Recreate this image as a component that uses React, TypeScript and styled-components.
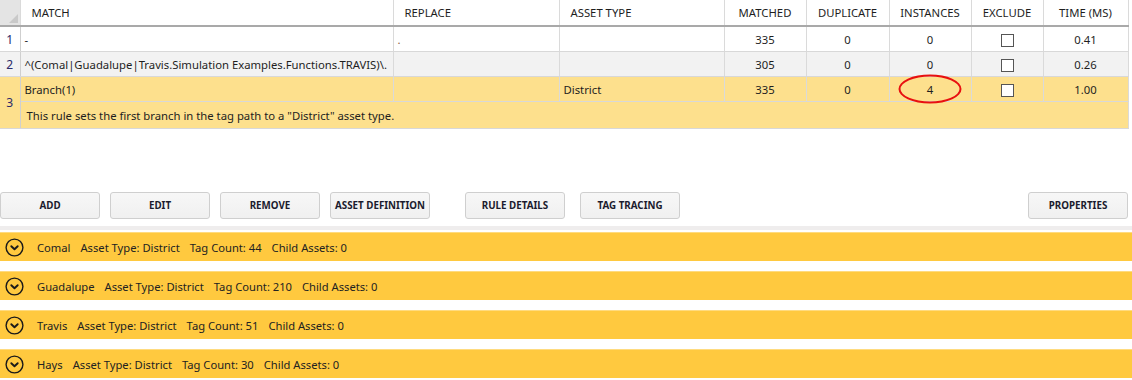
import React from "react";
import styled, { createGlobalStyle } from "styled-components";

const GlobalStyle = createGlobalStyle`
  body {
    margin: 0;
    background: #ffffff;
    font-family: "Segoe UI", "Noto Sans", "Liberation Sans", sans-serif;
    color: #1e1e1e;
  }
`;

const Page = styled.div`
  width: 1132px;
  height: 380px;
  overflow: hidden;
  display: flex;
  flex-direction: column;
`;

const GridTable = styled.table`
  width: 1128px;
  border-collapse: collapse;
  table-layout: fixed;
  font-size: 11.3px;
`;

const HeadCell = styled.th<{ $center?: boolean }>`
  height: 25px;
  padding: 0 0 0 ${(p) => (p.$center ? "0" : "11px")};
  text-align: ${(p) => (p.$center ? "center" : "left")};
  font-weight: 400;
  background: #ffffff;
  border-right: 1px solid #dadada;
  border-bottom: 2px solid #a9a9a9;
  white-space: nowrap;
  overflow: hidden;
`;

const Corner = styled.th`
  position: relative;
  background: #e4e4e4;
  border-right: 1px solid #dadada;
  border-bottom: 2px solid #a9a9a9;
  &::after {
    content: "";
    position: absolute;
    right: 2px;
    bottom: 2px;
    border-left: 9px solid transparent;
    border-bottom: 9px solid #c9c9c9;
  }
`;

const Row = styled.tr<{ $bg: string }>`
  background: ${(p) => p.$bg};
`;

const RowHead = styled.td`
  text-align: center;
  font-size: 12px;
  color: #2a2a6a;
  border-right: 1px solid #cfcfcf;
  border-bottom: 1px solid #d8d8d8;
`;

const Cell = styled.td<{ $center?: boolean }>`
  position: relative;
  height: 24px;
  padding: 0 0 0 ${(p) => (p.$center ? "0" : "4px")};
  text-align: ${(p) => (p.$center ? "center" : "left")};
  border-right: 1px solid #dadada;
  border-bottom: 1px solid #d8d8d8;
  white-space: nowrap;
`;

const DetailCell = styled.td`
  height: 26px;
  padding: 0 0 0 6px;
  border-bottom: 1px solid #d8d8d8;
  border-right: 1px solid #dadada;
`;

const Dot = styled.span`
  color: #8a5a3a;
`;

const Check = styled.span`
  display: inline-block;
  width: 13px;
  height: 13px;
  box-sizing: border-box;
  border: 1px solid #555;
  background: #fff;
  vertical-align: middle;
`;

const Circled = styled.span`
  position: absolute;
  left: 50%;
  top: 50%;
  width: 63px;
  height: 29px;
  transform: translate(-50%, -50%);
  box-sizing: border-box;
  border: 2.5px solid #e81010;
  border-radius: 50%;
`;

const Toolbar = styled.div`
  display: flex;
  align-items: center;
  margin-top: 63px;
  padding-right: 4px;
`;

const Button = styled.button<{ $gap?: number }>`
  width: 100px;
  height: 27px;
  margin-left: ${(p) => p.$gap ?? 10}px;
  padding: 0;
  border: 1px solid #cfcfcf;
  border-radius: 3px;
  background: linear-gradient(#f7f7f7, #f0f0f0);
  font-family: "Segoe UI", "Noto Sans", "Liberation Sans", sans-serif;
  font-size: 9.8px;
  font-weight: 700;
  color: #1b1b2e;
  white-space: nowrap;
  &:first-child {
    margin-left: 0;
  }
`;

const Fill = styled.div`
  flex: 1;
`;

const Splitter = styled.div`
  height: 4px;
  margin-top: 7px;
  background: #efeded;
`;

const AssetList = styled.div`
  display: flex;
  flex-direction: column;
  gap: 10px;
  margin-top: 2px;
`;

const AssetBar = styled.div`
  height: 29px;
  box-sizing: border-box;
  display: flex;
  align-items: center;
  gap: 10px;
  padding-left: 5px;
  background: #ffc93f;
  border-top: 1px solid #ffdb7f;
  font-size: 11.2px;
  color: #222;
`;

const Info = styled.span<{ $first?: boolean }>`
  margin-left: ${(p) => (p.$first ? "3px" : "0")};
  white-space: nowrap;
`;

const ChevronCircle = () => (
  <svg width="19" height="19" viewBox="0 0 19 19">
    <circle cx="9.5" cy="9.5" r="8.4" fill="none" stroke="#1a1a1a" strokeWidth="1.4" />
    <path d="M6.3 8.2 L9.5 11.3 L12.7 8.2" fill="none" stroke="#1a1a1a" strokeWidth="1.9" strokeLinecap="round" strokeLinejoin="round" />
  </svg>
);

const columns = [
  { label: "MATCH", width: 373 },
  { label: "REPLACE", width: 166 },
  { label: "ASSET TYPE", width: 165 },
  { label: "MATCHED", width: 82, center: true },
  { label: "DUPLICATE", width: 83, center: true },
  { label: "INSTANCES", width: 82, center: true },
  { label: "EXCLUDE", width: 72, center: true },
  { label: "TIME (MS)", width: 85, center: true },
];

const assets = [
  { name: "Comal", tags: 44 },
  { name: "Guadalupe", tags: 210 },
  { name: "Travis", tags: 51 },
  { name: "Hays", tags: 30 },
];

export default function App() {
  return (
    <Page>
      <GlobalStyle />
      <GridTable>
        <colgroup>
          <col style={{ width: 20 }} />
          {columns.map((c) => (
            <col key={c.label} style={{ width: c.width }} />
          ))}
        </colgroup>
        <thead>
          <tr>
            <Corner />
            {columns.map((c) => (
              <HeadCell key={c.label} $center={c.center}>
                {c.label}
              </HeadCell>
            ))}
          </tr>
        </thead>
        <tbody>
          <Row $bg="#ffffff">
            <RowHead>1</RowHead>
            <Cell>-</Cell>
            <Cell>
              <Dot>.</Dot>
            </Cell>
            <Cell />
            <Cell $center>335</Cell>
            <Cell $center>0</Cell>
            <Cell $center>0</Cell>
            <Cell $center>
              <Check />
            </Cell>
            <Cell $center>0.41</Cell>
          </Row>
          <Row $bg="#f2f2f2">
            <RowHead>2</RowHead>
            <Cell>^(Comal|Guadalupe|Travis.Simulation Examples.Functions.TRAVIS)\.</Cell>
            <Cell />
            <Cell />
            <Cell $center>305</Cell>
            <Cell $center>0</Cell>
            <Cell $center>0</Cell>
            <Cell $center>
              <Check />
            </Cell>
            <Cell $center>0.26</Cell>
          </Row>
          <Row $bg="#fde08d">
            <RowHead rowSpan={2}>3</RowHead>
            <Cell>Branch(1)</Cell>
            <Cell />
            <Cell>District</Cell>
            <Cell $center>335</Cell>
            <Cell $center>0</Cell>
            <Cell $center>
              4
              <Circled />
            </Cell>
            <Cell $center>
              <Check />
            </Cell>
            <Cell $center>1.00</Cell>
          </Row>
          <Row $bg="#fde08d">
            <DetailCell colSpan={8}>
              This rule sets the first branch in the tag path to a "District" asset type.
            </DetailCell>
          </Row>
        </tbody>
      </GridTable>
      <Toolbar>
        <Button>ADD</Button>
        <Button>EDIT</Button>
        <Button>REMOVE</Button>
        <Button>ASSET DEFINITION</Button>
        <Button $gap={35}>RULE DETAILS</Button>
        <Button $gap={15}>TAG TRACING</Button>
        <Fill />
        <Button>PROPERTIES</Button>
      </Toolbar>
      <Splitter />
      <AssetList>
        {assets.map((a) => (
          <AssetBar key={a.name}>
            <ChevronCircle />
            <Info $first>{a.name}</Info>
            <Info>Asset Type: District</Info>
            <Info>Tag Count: {a.tags}</Info>
            <Info>Child Assets: 0</Info>
          </AssetBar>
        ))}
      </AssetList>
    </Page>
  );
}
